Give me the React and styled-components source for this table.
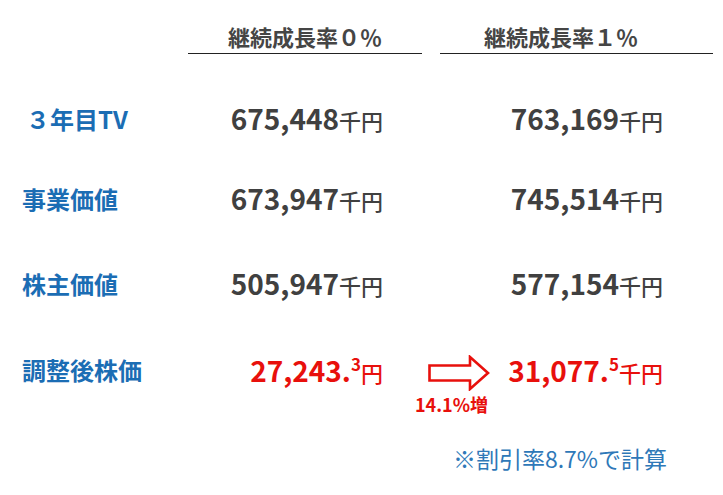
import styled, { createGlobalStyle } from "styled-components"

const GlobalStyle = createGlobalStyle`
  html, body {
    margin: 0;
    padding: 0;
    background: #ffffff;
  }
  body {
    font-family: "Noto Sans CJK JP", "Noto Sans", sans-serif;
  }
`

const Page = styled.div`
  width: 723px;
  height: 495px;
  box-sizing: border-box;
  padding-top: 20px;
  display: flex;
  flex-direction: column;
`

const Grid = styled.div`
  display: grid;
  grid-template-columns: 188px 234px 18px 273px;
  align-items: center;
  height: ${p => p.h || 40}px;
  margin-top: ${p => p.top || 0}px;
`

const HeadCell = styled.div`
  grid-column: ${p => p.col};
  font-size: 22px;
  font-weight: 700;
  line-height: 30px;
  color: #454545;
  padding-bottom: 2px;
  padding-right: ${p => p.shift || 0}px;
  text-align: center;
  border-bottom: 1.5px solid #222;
  align-self: end;
`

const Label = styled.div`
  grid-column: 1;
  padding-left: 22px;
  font-size: 24px;
  font-weight: 700;
  line-height: 40px;
  color: #1b6db4;
  white-space: nowrap;
`

const Value = styled.div`
  grid-column: ${p => p.col || "auto"};
  text-align: right;
  padding-right: ${p => p.pr}px;
  font-size: 28px;
  font-weight: 700;
  line-height: 40px;
  color: ${p => (p.red ? "#e8100c" : "#404040")};
  white-space: nowrap;
  flex: ${p => p.grow ? 1 : "none"};
  width: ${p => p.w ? p.w + "px" : "auto"};
  box-sizing: border-box;
`

const Unit = styled.span`
  font-size: 22px;
  font-weight: 500;
`

const Sup = styled.sup`
  font-size: 17px;
  font-weight: 700;
  vertical-align: 11px;
  line-height: 0;
`

const LastRow = styled.div`
  display: flex;
  align-items: flex-start;
  margin-top: ${p => p.top}px;
`

const LastLabel = styled(Label)`
  width: 188px;
  box-sizing: border-box;
`

const ArrowCol = styled.div`
  width: 80px;
  margin-left: 32px;
  display: flex;
  flex-direction: column;
  align-items: flex-start;
`

const ArrowIcon = styled.svg`
  display: block;
  margin-top: 5px;
  margin-left: 13px;
`

const Growth = styled.div`
  margin-top: 3px;
  font-size: 18px;
  font-weight: 700;
  line-height: 20px;
  color: #e8100c;
  white-space: nowrap;
`

const Note = styled.div`
  margin-top: ${p => p.top}px;
  text-align: right;
  padding-right: 56px;
  font-size: 23px;
  font-weight: 400;
  line-height: 30px;
  color: #2e78b8;
`

const rows = [
  { label: "３年目TV", a: "675,448", b: "763,169", top: 44, pl: 26 },
  { label: "事業価値", a: "673,947", b: "745,514", top: 40 },
  { label: "株主価値", a: "505,947", b: "577,154", top: 45 },
]

export default function App() {
  return (
    <>
      <GlobalStyle />
      <Page>
        <Grid h={34}>
          <HeadCell col={2}>継続成長率０％</HeadCell>
          <HeadCell col={4} shift={31}>継続成長率１％</HeadCell>
        </Grid>
        {rows.map(r => (
          <Grid key={r.label} top={r.top}>
            <Label style={r.pl ? { paddingLeft: r.pl } : undefined}>{r.label}</Label>
            <Value col={2} pr={39}>{r.a}<Unit>千円</Unit></Value>
            <Value col={4} pr={50}>{r.b}<Unit>千円</Unit></Value>
          </Grid>
        ))}
        <LastRow top={47}>
          <LastLabel>調整後株価</LastLabel>
          <Value red w={195} pr={0}>27,243.<Sup>3</Sup><Unit>円</Unit></Value>
          <ArrowCol>
            <ArrowIcon width="62" height="36" viewBox="0 0 62 36">
              <path
                d="M1.5 10.5 H42 V2 L60 18 L42 34 V25.5 H1.5 Z"
                fill="none"
                stroke="#e8100c"
                strokeWidth="2.6"
                strokeLinejoin="miter"
              />
            </ArrowIcon>
            <Growth>14.1%増</Growth>
          </ArrowCol>
          <Value red grow pr={60}>31,077.<Sup>5</Sup><Unit>千円</Unit></Value>
        </LastRow>
        <Note top={29}>※割引率8.7%で計算</Note>
      </Page>
    </>
  )
}
